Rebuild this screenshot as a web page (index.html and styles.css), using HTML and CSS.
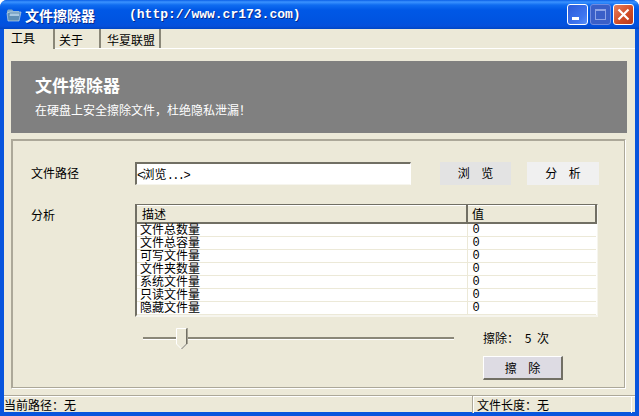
FILE: index.html
```html
<!DOCTYPE html>
<html lang="zh-CN">
<head>
<meta charset="utf-8">
<title>文件擦除器</title>
<link rel="stylesheet" href="styles.css">
</head>
<body>
<div class="window">
  <header class="titlebar">
    <svg class="app-icon" width="16" height="16" viewBox="0 0 16 16"><path d="M1 4 L2 2.5 H6 L7.5 4 H13 V6 H1 Z" fill="#7fa8c8"/><path d="M1 6 L4 5 H15 L13 14 H2 Z" fill="#5f8fb5" stroke="#d5e5f0" stroke-width=".6"/><path d="M4 6.5 H13.5 L13 9 H3.5 Z" fill="#a9c9e2"/></svg>
    <span class="title-name">文件擦除器</span>
    <span class="title-url">(http://www.cr173.com)</span>
    <div class="caption-buttons">
      <div class="cap cap-min"><svg width="21" height="21" viewBox="0 0 21 21"><rect x="5" y="13" width="7" height="3" fill="#fff"/></svg></div>
      <div class="cap cap-max"><svg width="21" height="21" viewBox="0 0 21 21"><rect x="5.5" y="5.5" width="10" height="10" fill="none" stroke="#8ea4e6"/><rect x="5" y="5" width="11" height="2" fill="#8ea4e6"/></svg></div>
      <div class="cap cap-close"><svg width="21" height="21" viewBox="0 0 21 21"><path d="M5.5 5.5 L15.5 15.5 M15.5 5.5 L5.5 15.5" stroke="#fff" stroke-width="2.2"/></svg></div>
    </div>
  </header>
  <div class="client">
    <nav class="tabs">
      <div class="tab tab-active">工具</div>
      <div class="tab tab-about">关于</div>
      <div class="tab tab-union">华夏联盟</div>
    </nav>
    <section class="banner">
      <h1 class="banner-title">文件擦除器</h1>
      <p class="banner-sub">在硬盘上安全擦除文件，杜绝隐私泄漏！</p>
    </section>
    <main class="panel">
      <div class="form-grid">
        <div class="label">文件路径</div>
        <div class="path-field"><span class="mono">&lt;</span>浏览<span class="mono">...&gt;</span></div>
        <div class="flat-btn flat-browse">浏 览</div>
        <div class="flat-btn flat-analyze">分 析</div>
        <div class="label label-analysis">分析</div>
        <div class="list-view">
          <table class="list-table">
            <thead><tr><th class="col-desc">描述</th><th class="col-val">值</th></tr></thead>
            <tbody>
              <tr><td>文件总数量</td><td class="val">0</td></tr>
              <tr><td>文件总容量</td><td class="val">0</td></tr>
              <tr><td>可写文件量</td><td class="val">0</td></tr>
              <tr><td>文件夹数量</td><td class="val">0</td></tr>
              <tr><td>系统文件量</td><td class="val">0</td></tr>
              <tr><td>只读文件量</td><td class="val">0</td></tr>
              <tr><td>隐藏文件量</td><td class="val">0</td></tr>
            </tbody>
          </table>
        </div>
      </div>
      <div class="erase-row">
        <div class="slider">
          <div class="track"></div>
          <svg class="thumb" width="12" height="22" viewBox="0 0 12 22"><path d="M.5 .5 H10.5 V16 L5.5 21 L.5 16 Z" fill="#ece9d8" stroke="#fff"/><path d="M10.5 .5 V16 L5.5 21" fill="none" stroke="#716f64"/><path d="M11.5 0 V16" stroke="#a5a294"/></svg>
        </div>
        <div class="erase-side">
          <div class="erase-count">擦除： 5 次</div>
          <div class="erase-btn">擦 除</div>
        </div>
      </div>
    </main>
    <footer class="statusbar">
      <div class="status status-left">当前路径：无</div>
      <div class="status status-right">文件长度：无</div>
    </footer>
  </div>
</div>
</body>
</html>
```
FILE: styles.css
```css
* { box-sizing: border-box; }
html, body { margin: 0; padding: 0; }
body {
  width: 639px;
  height: 416px;
  overflow: hidden;
  font-family: "Noto Sans CJK SC", "Liberation Sans", sans-serif;
  font-size: 12px;
  color: #000;
}
.window {
  width: 639px;
  height: 416px;
  display: flex;
  flex-direction: column;
  background: #0855dd;
  border-radius: 7px 7px 0 0;
  overflow: hidden;
}
.titlebar {
  height: 29px;
  flex: none;
  display: flex;
  align-items: center;
  padding: 0 5px 0 6px;
  color: #fff;
  font-weight: 700;
  font-size: 14px;
  text-shadow: 1px 1px 0 #0a2a8c;
  background: linear-gradient(180deg, #0a5fe6 0, #3b93ff 2px, #0f6cf0 5px, #0058e6 10px, #0053e0 22px, #0550dc 26px, #0046c4 29px);
}
.app-icon { flex: none; margin-right: 3px; }
.title-name { width: 104px; line-height: 20px; }
.title-url {
  font-family: "Liberation Mono", monospace;
  font-size: 13px;
  line-height: 20px;
}
.caption-buttons { margin-left: auto; display: flex; gap: 2px; }
.cap {
  width: 21px;
  height: 21px;
  border: 1px solid #fff;
  border-radius: 3px;
  display: flex;
  align-items: center;
  justify-content: center;
}
.cap svg { flex: none; }
.cap-min { background: linear-gradient(135deg, #2c5ad8, #3f76f0 70%, #5a90f8); }
.cap-max { background: #3a5fc8; border-color: #6f8be0; }
.cap-close { background: linear-gradient(135deg, #e8805f, #cf4a24 60%, #b8381c); }
.client {
  flex: 1;
  min-height: 0;
  margin: 0 4px 4px;
  background: #ece9d8;
  display: flex;
  flex-direction: column;
}
.tabs {
  height: 20px;
  flex: none;
  display: flex;
  border-bottom: 1px solid #fff;
}
.tab {
  height: 19px;
  border-right: 2px solid #8a8778;
  line-height: 19px;
  white-space: nowrap;
}
.tab-active { width: 51px; padding-left: 7px; height: 20px; margin-bottom: -1px; background: #ece9d8; position: relative; line-height: 17px; }
.tab-about { width: 46px; padding-left: 4px; line-height: 21px; }
.tab-union { width: 60px; padding-left: 6px; line-height: 21px; }
.banner {
  flex: none;
  height: 72px;
  margin: 12px 8px 6px 7px;
  padding: 14px 24px 0;
  background: #808080;
  color: #fff;
}
.banner-title { margin: 0; font-size: 17px; line-height: 20px; font-weight: 700; }
.banner-sub { margin: 7px 0 0; font-size: 12px; line-height: 16px; }
.panel {
  flex: none;
  width: 615px;
  height: 250px;
  margin-left: 7px;
  padding: 22px 0 0 19px;
  border: 1px solid #fff;
  outline: 1px solid #aca899;
  outline-offset: -2px;
  border-left-color: #aca899;
  border-top-color: #aca899;
}
.form-grid {
  display: grid;
  grid-template-columns: 104px 276px 71px 72px;
  grid-template-rows: 23px 113px;
  column-gap: 0;
  row-gap: 19px;
}
.label { line-height: 22px; }
.label-analysis { line-height: 22px; }
.path-field {
  border: 1px solid #fff;
  border-top: 2px solid #716f64;
  border-left: 2px solid #716f64;
  border-bottom: 1px solid #f6f5ee;
  background: #fff;
  line-height: 19px;
  white-space: nowrap;
  overflow: hidden;
}
.mono { font-family: "Liberation Mono", monospace; letter-spacing: -1.6px; }
.flat-btn { text-align: center; line-height: 22px; word-spacing: 9px; }
.flat-browse { margin-left: 29px; width: 71px; background: #e3e3e3; }
.flat-analyze { margin-left: 45px; width: 72px; background: #f0f0f0; }
.list-view {
  grid-column: 2 / span 3;
  width: 463px;
  height: 113px;
  border-top: 1px solid #716f64;
  border-left: 2px solid #716f64;
  border-right: 1px solid #f6f5ee;
  border-bottom: 2px solid #f6f5ee;
  background: #fff;
  overflow: hidden;
}
.list-table {
  width: 100%;
  border-collapse: collapse;
  table-layout: fixed;
  background: #fff;
}
.list-table th {
  height: 17px;
  padding: 0 0 1px 5px;
  font-weight: 400;
  text-align: left;
  line-height: 13px;
  background: #ece9d8;
  border-top: 1px solid #fff;
  border-bottom: 2px solid #716f64;
}
.col-desc { width: 330px; border-right: 2px solid #716f64; }
.col-val { border-right: 2px solid #716f64; }
.list-table th.col-val { padding-left: 4px; }
.list-table td {
  height: 13px;
  padding: 0 0 2px 3px;
  line-height: 9px;
  vertical-align: top;
  border-bottom: 1px solid #ece9d8;
  font-size: 12px;
  white-space: nowrap;
}
.list-table td.val {
  padding: 1px 0 1px 5px;
  line-height: 10px;
  border-left: 1px solid #ece9d8;
  font-family: "Liberation Mono", monospace;
}
.erase-row { display: flex; margin-top: 12px; }
.slider {
  position: relative;
  width: 311px;
  height: 22px;
  margin: 0 0 0 112px;
  flex: none;
}
.track {
  margin-top: 8px;
  height: 3px;
  background: #8a8778;
  border-bottom: 1px solid #fff;
}
.thumb { position: absolute; left: 33px; top: -1px; }
.erase-side { margin-left: 29px; width: 80px; }
.erase-count { line-height: 18px; white-space: nowrap; word-spacing: 3px; }
.erase-btn {
  margin-top: 9px;
  width: 80px;
  height: 24px;
  background: #dddbe3;
  text-align: center;
  line-height: 21px;
  word-spacing: 9px;
  border: 1px solid #fff;
  border-right: 2px solid #716f64;
  border-bottom: 2px solid #716f64;
}
.statusbar {
  margin-top: 6px;
  flex: 1;
  display: flex;
  border-top: 1px solid #aca899;
  box-shadow: inset 0 1px 0 #fff;
}
.status { line-height: 16px; padding-top: 1px; white-space: nowrap; }
.status-left { width: 468px; }
.status-right {
  width: 160px;
  padding-left: 4px;
  border-left: 1px solid #aca899;
  border-right: 1px solid #fff;
  box-shadow: inset 1px 0 0 #fff;
}
```
